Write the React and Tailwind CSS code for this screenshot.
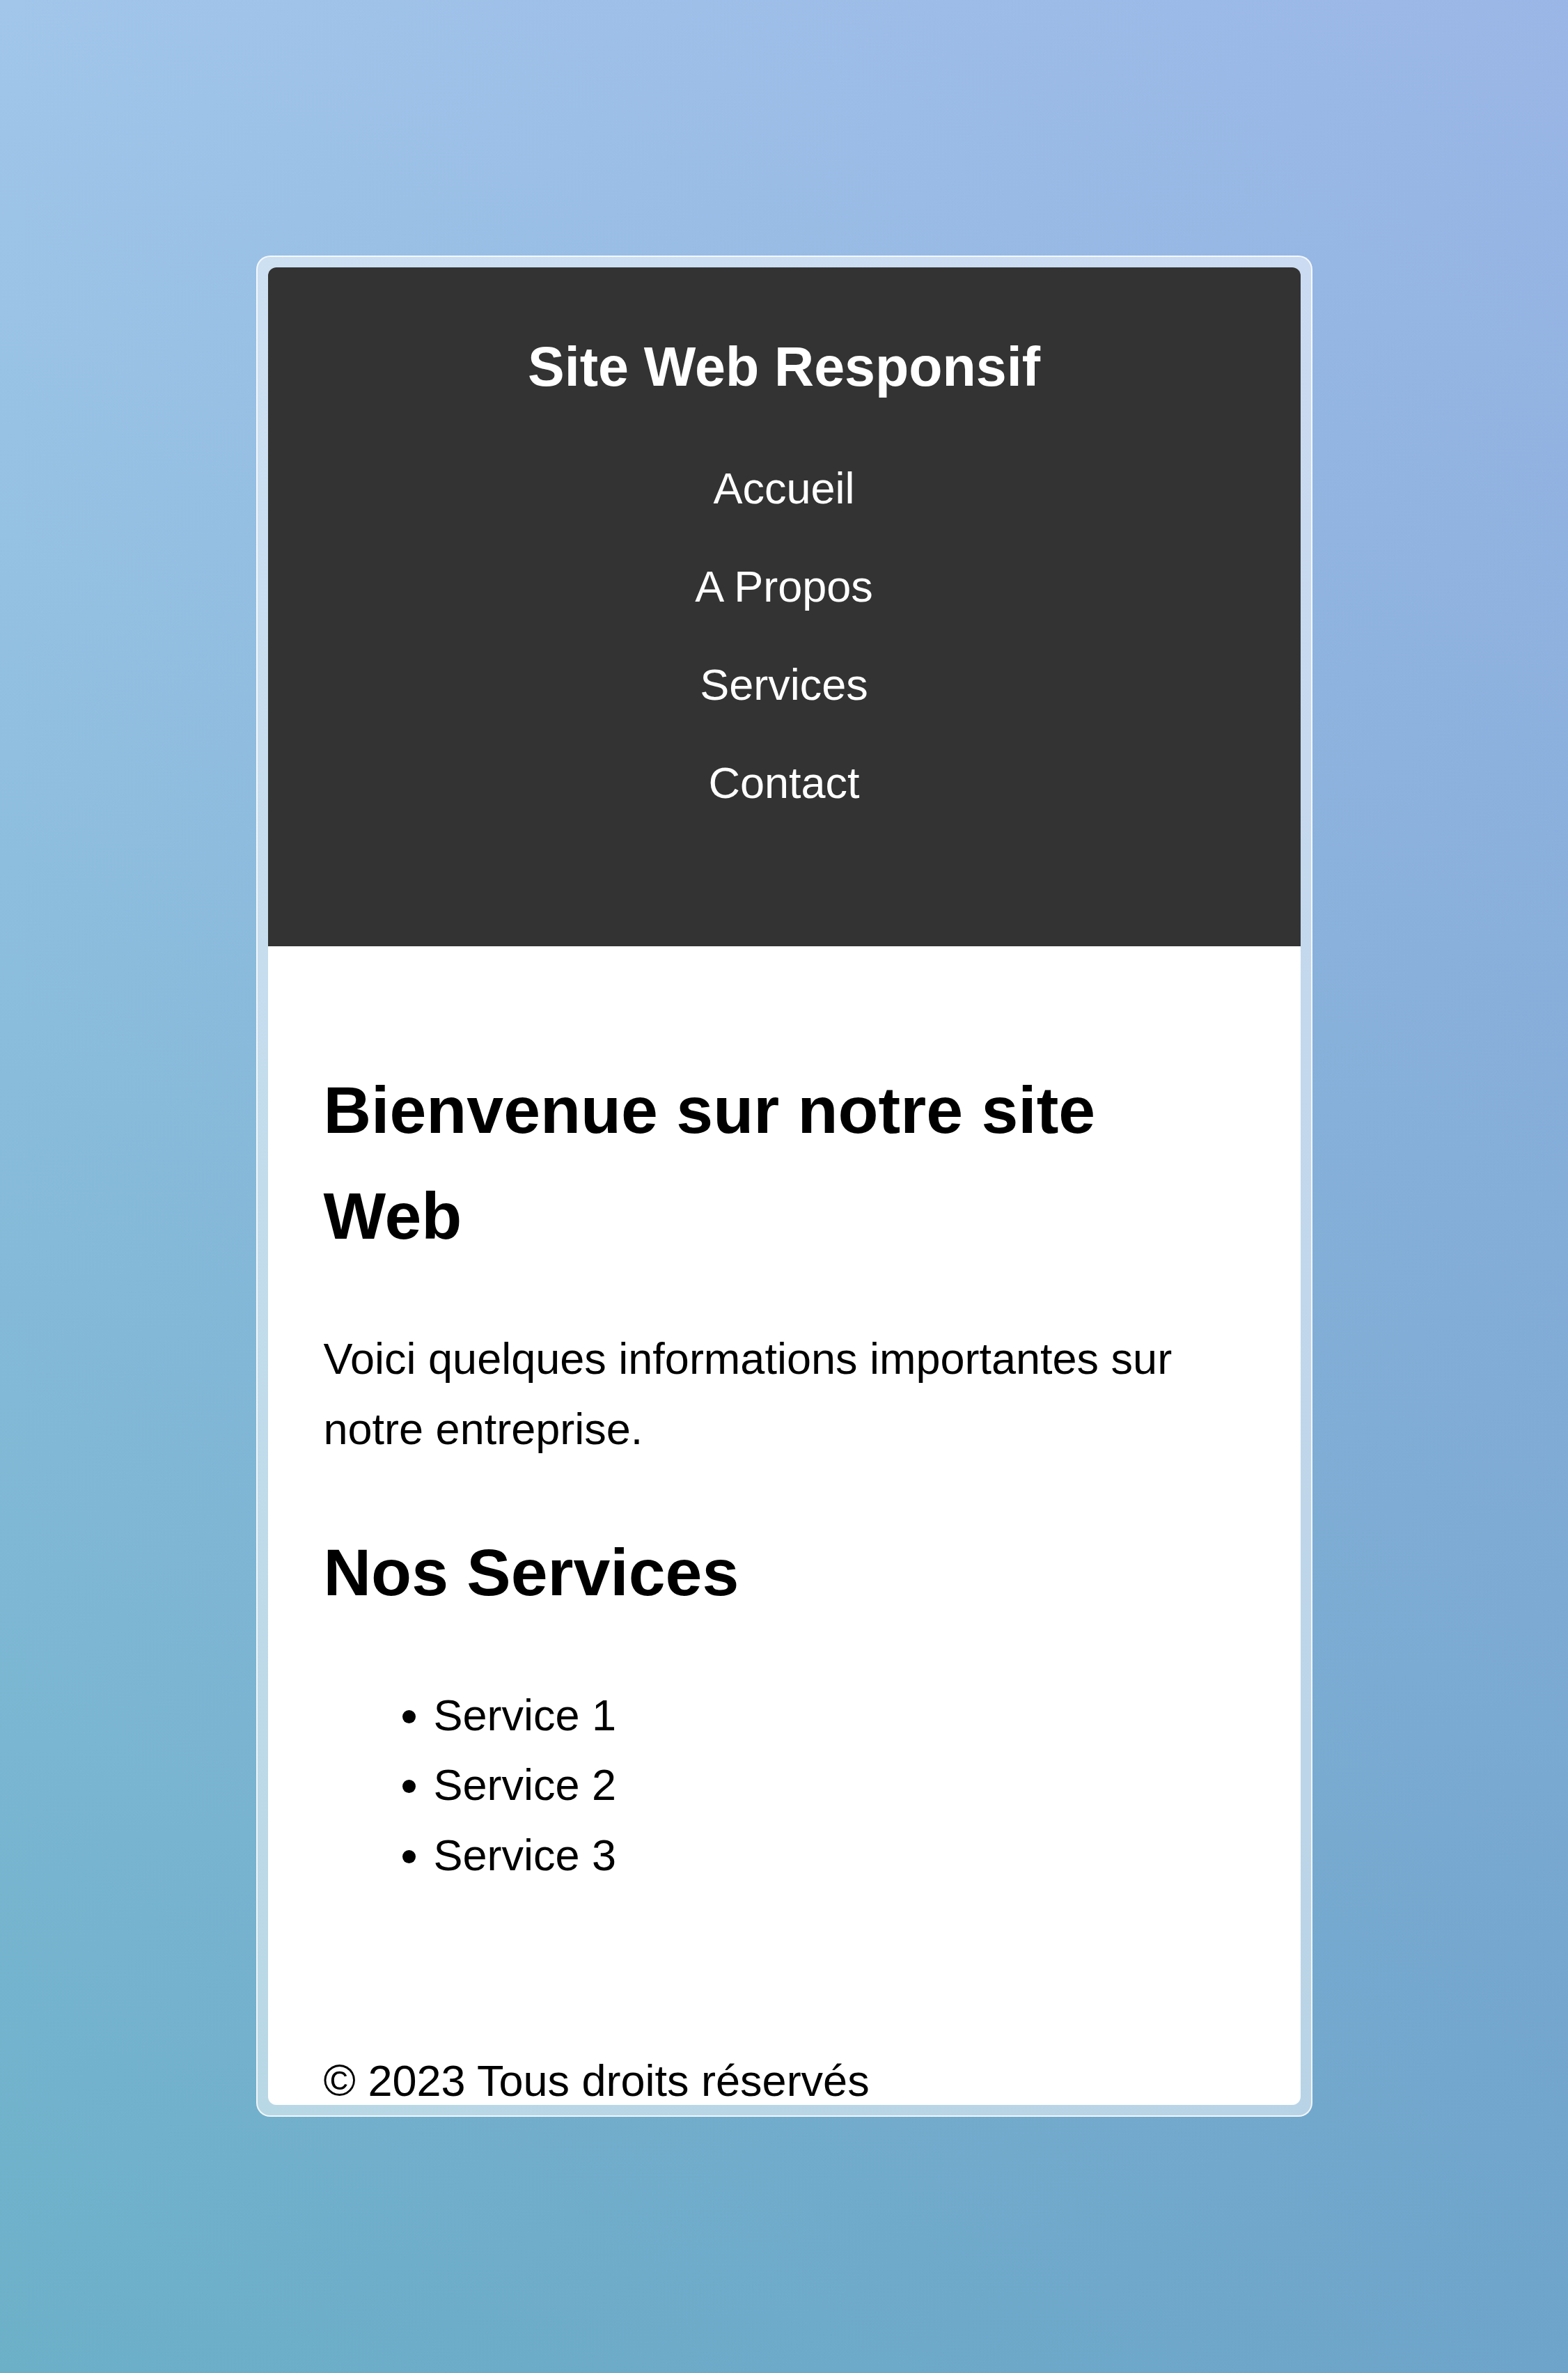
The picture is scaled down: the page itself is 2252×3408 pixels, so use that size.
import React from 'react';

const navLinks = ['Accueil', 'A Propos', 'Services', 'Contact'];
const services = ['Service 1', 'Service 2', 'Service 3'];

const App = () => {
  return (
    <div
      className="min-h-screen w-full flex justify-center pt-[367px] bg-[linear-gradient(to_right,rgba(120,100,210,0)_0%,rgba(120,100,210,0.16)_100%),linear-gradient(to_bottom,#a1c6ea,#6cb0c8)]"
      style={{ fontFamily: '"Liberation Sans", Arial, Helvetica, sans-serif' }}
    >
      {/* Cadre translucide */}
      <div className="w-[1517px] h-[2673px] rounded-[20px] border-2 border-white/80 bg-white/50 p-[15px]">
        <div className="h-full rounded-[12px] bg-white overflow-hidden">
          <header className="h-[975px] bg-[#333333] text-white text-center pt-[80px]">
            <h1 className="text-[79px] font-bold leading-[1.6]">Site Web Responsif</h1>
            <nav className="mt-[41px]">
              <ul>
                {navLinks.map((link) => (
                  <li key={link} className="py-[20px] text-[63px] leading-[1.6]">
                    <a href="#" className="text-white">{link}</a>
                  </li>
                ))}
              </ul>
            </nav>
          </header>

          <main className="px-[80px] pt-[80px] pb-[80px] text-black text-[63px] leading-[1.6]">
            <h2 className="mt-[79px] mb-[79px] text-[95px] font-bold leading-[1.6]">
              Bienvenue sur notre site Web
            </h2>
            <p>Voici quelques informations importantes sur notre entreprise.</p>
            <h2 className="mt-[79px] mb-[79px] text-[95px] font-bold leading-[1.6]">Nos Services</h2>
            <ul className="list-disc pl-[158px] mb-[63px]">
              {services.map((s) => (
                <li key={s}>{s}</li>
              ))}
            </ul>
          </main>

          <footer className="px-[80px] pt-[80px] text-black text-[63px] leading-[1.6]">
            <p>© 2023 Tous droits réservés</p>
          </footer>
        </div>
      </div>
    </div>
  );
};

export default App;
